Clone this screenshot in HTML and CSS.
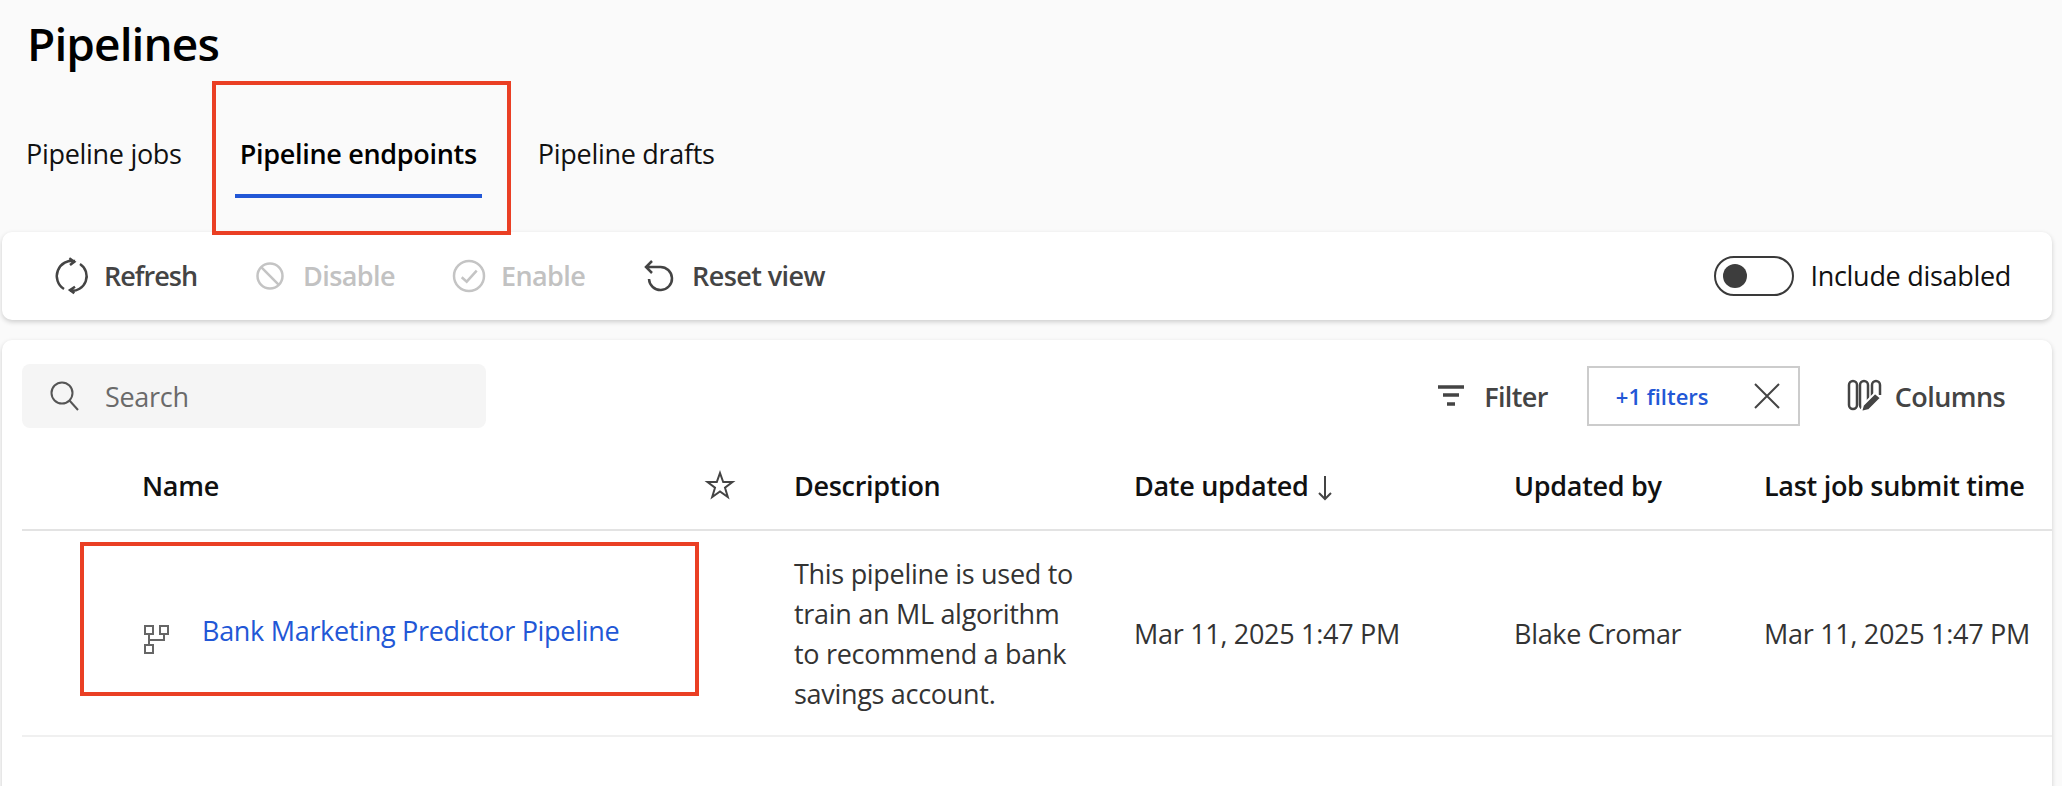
FILE: index.html
```html
<!DOCTYPE html>
<html lang="en">

<head>
    <meta charset="UTF-8">
    <meta name="viewport" content="width=device-width, initial-scale=1.0">
    <title>Pipelines</title>
    <link rel="stylesheet" href="styles.css">
</head>

<body>
    <div class="page">
        <h1 class="title">Pipelines</h1>

        <div class="tabs">
            <div class="tab">Pipeline jobs</div>
            <div class="tab active">Pipeline endpoints</div>
            <div class="tab">Pipeline drafts</div>
        </div>

        <div class="card toolbar">
            <button class="tool tool-refresh">
                <svg class="ico" width="40" height="40" viewBox="0 0 40 40">
                    <path d="M23 5A15.300 15.300 0 0 0 12 33M17.300 2.300L22.300 5.700L18 9" />
                    <path d="M28 8A14.600 14.600 0 0 1 18 34.700M23 30.700L18 34L22.300 37.300" />
                </svg>
                Refresh
            </button>
            <button class="tool tool-disable off">
                <svg class="ico" width="28" height="28" viewBox="0 0 28 28">
                    <circle cx="14" cy="14" r="12.500" />
                    <path d="M5.200 5.200L22.800 22.800" />
                </svg>
                Disable
            </button>
            <button class="tool tool-enable off">
                <svg class="ico" width="32" height="32" viewBox="0 0 32 32">
                    <circle cx="16" cy="16" r="15" />
                    <path d="M8.700 17.300L13.700 21.700L23.700 10.700" />
                </svg>
                Enable
            </button>
            <button class="tool tool-reset">
                <svg class="ico" width="32" height="32" viewBox="0 0 32 32">
                    <path d="M17 4H3M9 -2L3 4L9 10" transform="translate(0 3)" />
                    <path d="M17 7A11.500 11.500 0 1 1 6 19" />
                </svg>
                Reset view
            </button>
            <div class="toggle-wrap">
                <span class="toggle"><span class="knob"></span></span>
                <span class="toggle-label">Include disabled</span>
            </div>
        </div>

        <div class="card main">
            <div class="controls">
                <div class="search">
                    <svg class="ico" width="30" height="30" viewBox="0 0 30 30">
                        <circle cx="12" cy="12" r="10.500" />
                        <path d="M19.500 19.500L28 29" />
                    </svg>
                    <span>Search</span>
                </div>
                <div class="actions">
                    <button class="tool tool-filter">
                        <svg class="ico" width="28" height="22" viewBox="0 0 28 22">
                            <path d="M1 2H27M6 10H22M10 19H18" />
                        </svg>
                        Filter
                    </button>
                    <div class="chip">
                        <span class="chip-text">+1 filters</span>
                        <svg class="ico" width="26" height="26" viewBox="0 0 26 26">
                            <path d="M1 1L25 25M25 1L1 25" />
                        </svg>
                    </div>
                    <button class="tool tool-columns">
                        <svg class="ico" width="34" height="34" viewBox="0 0 34 34">
                            <rect x="1" y="2" width="8" height="28" rx="4" />
                            <rect x="12" y="2" width="8" height="28" rx="4" />
                            <path d="M24 20V6A4 4 0 0 1 32 6V16" />
                            <path class="pen" d="M13 33L15 26L27 14L33 19L21 31Z" />
                        </svg>
                        Columns
                    </button>
                </div>
            </div>

            <div class="table">
                <div class="row head">
                    <div class="cell name-head">
                        <span>Name</span>
                        <svg class="ico star" width="28" height="28" viewBox="0 0 28 28">
                            <path d="M14 2L17.200 11H26.500L19 16.700L21.800 26L14 20.400L6.200 26L9 16.700L1.500 11H10.800Z" />
                        </svg>
                    </div>
                    <div class="cell">Description</div>
                    <div class="cell">Date updated
                        <svg class="ico sort" width="16" height="26" viewBox="0 0 16 26">
                            <path d="M8 1V24M2 18L8 24L14 18" />
                        </svg>
                    </div>
                    <div class="cell">Updated by</div>
                    <div class="cell">Last job submit time</div>
                </div>
                <div class="row body">
                    <div class="cell name-cell">
                        <svg class="ico node" width="26" height="28" viewBox="0 0 26 28">
                            <rect x="2" y="1" width="8" height="8" />
                            <rect x="17" y="1" width="8" height="8" />
                            <rect x="2" y="20" width="8" height="8" />
                            <path d="M6 9V20M21 9V15H6" />
                        </svg>
                        <a class="link">Bank Marketing Predictor Pipeline</a>
                    </div>
                    <div class="cell desc">This pipeline is used to train an ML algorithm to recommend a bank savings account.</div>
                    <div class="cell">Mar 11, 2025 1:47 PM</div>
                    <div class="cell">Blake Cromar</div>
                    <div class="cell">Mar 11, 2025 1:47 PM</div>
                </div>
            </div>
        </div>

        <!-- red annotation boxes -->
        <div class="mark mark-tab"></div>
        <div class="mark mark-name"></div>
    </div>
</body>

</html>
```

FILE: styles.css
```css
* {
    box-sizing: border-box;
}

html,
body {
    margin: 0;
    height: 100%;
    overflow: hidden;
}

body {
    background-color: #fafafa;
    font-family: "Open Sans", "Noto Sans", sans-serif;
    font-size: 27px;
    letter-spacing: -0.3px;
    color: #333;
}

.page {
    position: relative;
    height: 786px;
    width: 2062px;
    padding: 0 10px 0 2px;
    overflow: hidden;
}

.title {
    margin: 0;
    padding: 13px 0 0 25px;
    height: 81px;
    font-size: 46px;
    font-weight: 600;
    line-height: 60px;
    letter-spacing: -0.9px;
    color: #000;
}

/* tabs */
.tabs {
    display: flex;
    height: 151px;
    padding: 55px 0 0 24px;
    gap: 58px;
}

.tab {
    height: 62px;
    line-height: 36px;
    color: #111;
}

.tab.active {
    font-weight: 600;
    color: #000;
    border-bottom: 4px solid #2257d6;
    padding: 0 5px;
    margin: 0 -2px 0 -5px;
}

/* cards */
.card {
    background-color: #fff;
    border-radius: 10px;
    box-shadow: 0 2px 5px rgba(0, 0, 0, 0.18);
}

.toolbar {
    display: flex;
    align-items: center;
    height: 88px;
    padding: 0 41px 2px 50px;
}

.toolbar .ico,
.toggle {
    margin-top: 2px;
}

.tool {
    display: flex;
    align-items: center;
    background: none;
    border: none;
    padding: 0;
    font: inherit;
    font-weight: 600;
    letter-spacing: -0.6px;
    color: #444;
}

.tool.off {
    color: #c2c2c2;
}

.ico {
    flex: none;
    fill: none;
    stroke: #444;
    stroke-width: 2.5;
    overflow: visible;
}

.off .ico {
    stroke: #c4c4c4;
}

.tool-refresh {
    letter-spacing: -1px;
}

.tool-refresh .ico {
    margin-right: 12px;
}

.tool-disable {
    margin-left: 59px;
}

.tool-disable .ico {
    margin-right: 19px;
}

.tool-enable {
    margin-left: 58px;
}

.tool-enable .ico {
    margin-right: 16px;
}

.tool-reset {
    margin-left: 58px;
}

.tool-reset .ico {
    margin-right: 17px;
}

.toggle-wrap {
    display: flex;
    align-items: center;
    margin-left: auto;
}

.toggle {
    display: flex;
    align-items: center;
    width: 80px;
    height: 40px;
    border: 2px solid #3a3a3a;
    border-radius: 20px;
    padding-left: 7px;
    margin-right: 16px;
}

.knob {
    width: 24px;
    height: 24px;
    border-radius: 50%;
    background-color: #3d3d3d;
}

.toggle-label {
    color: #111;
    font-weight: 400;
}

/* main card */
.main {
    height: 470px;
    margin-top: 20px;
    padding: 24px 0 0 20px;
}

.controls {
    display: flex;
    justify-content: space-between;
    align-items: center;
    height: 64px;
    padding-right: 47px;
}

.search {
    display: flex;
    align-items: center;
    width: 464px;
    height: 64px;
    background-color: #f5f5f5;
    border-radius: 8px;
    padding-left: 28px;
    color: #6a6a6a;
}

.search .ico {
    margin-right: 25px;
    stroke: #555;
    stroke-width: 2;
}

.actions {
    display: flex;
    align-items: center;
}

.tool-filter .ico {
    margin-right: 19px;
    stroke-width: 3.500;
}

.chip {
    display: flex;
    align-items: center;
    justify-content: space-between;
    width: 213px;
    height: 60px;
    margin-left: 39px;
    padding: 0 18px 0 27px;
    border: 2px solid #ccc;
    font-size: 22px;
    font-weight: 600;
    letter-spacing: 0;
    color: #2257d6;
}

.chip .ico {
    stroke-width: 2;
}

.tool-columns {
    margin-left: 48px;
}

.tool-columns .ico {
    margin-right: 13px;
}

.tool-columns .pen {
    fill: #444;
    stroke: #fff;
    stroke-width: 2;
}

/* table */
.row {
    display: grid;
    grid-template-columns: 772px 340px 380px 250px 1fr;
    align-items: center;
}

.head {
    height: 103px;
    border-bottom: 2px solid #e3e3e3;
    padding-top: 13px;
    font-weight: 600;
    color: #111;
}

.body {
    height: 206px;
    border-bottom: 2px solid #f0f0f0;
}

.cell {
    white-space: nowrap;
}

.name-head {
    display: flex;
    align-items: center;
    justify-content: space-between;
    padding: 0 60px 0 120px;
}

.star {
    stroke-width: 2;
}

.sort {
    margin-left: 2px;
    vertical-align: -5px;
    stroke-width: 2;
}

.name-cell {
    display: flex;
    align-items: flex-start;
    padding-left: 121px;
}

.node {
    margin-top: 12px;
    stroke: #666;
    stroke-width: 2;
    margin-right: 33px;
}

.link {
    color: #2257d6;
    line-height: 36px;
}

.desc {
    width: 292px;
    white-space: normal;
    line-height: 40px;
    padding-top: 1px;
}

/* red annotation boxes */
.mark {
    position: absolute;
    border: 4px solid #ea3f24;
    pointer-events: none;
}

.mark-tab {
    left: 212px;
    top: 81px;
    width: 299px;
    height: 154px;
}

.mark-name {
    left: 80px;
    top: 542px;
    width: 619px;
    height: 154px;
}
```
